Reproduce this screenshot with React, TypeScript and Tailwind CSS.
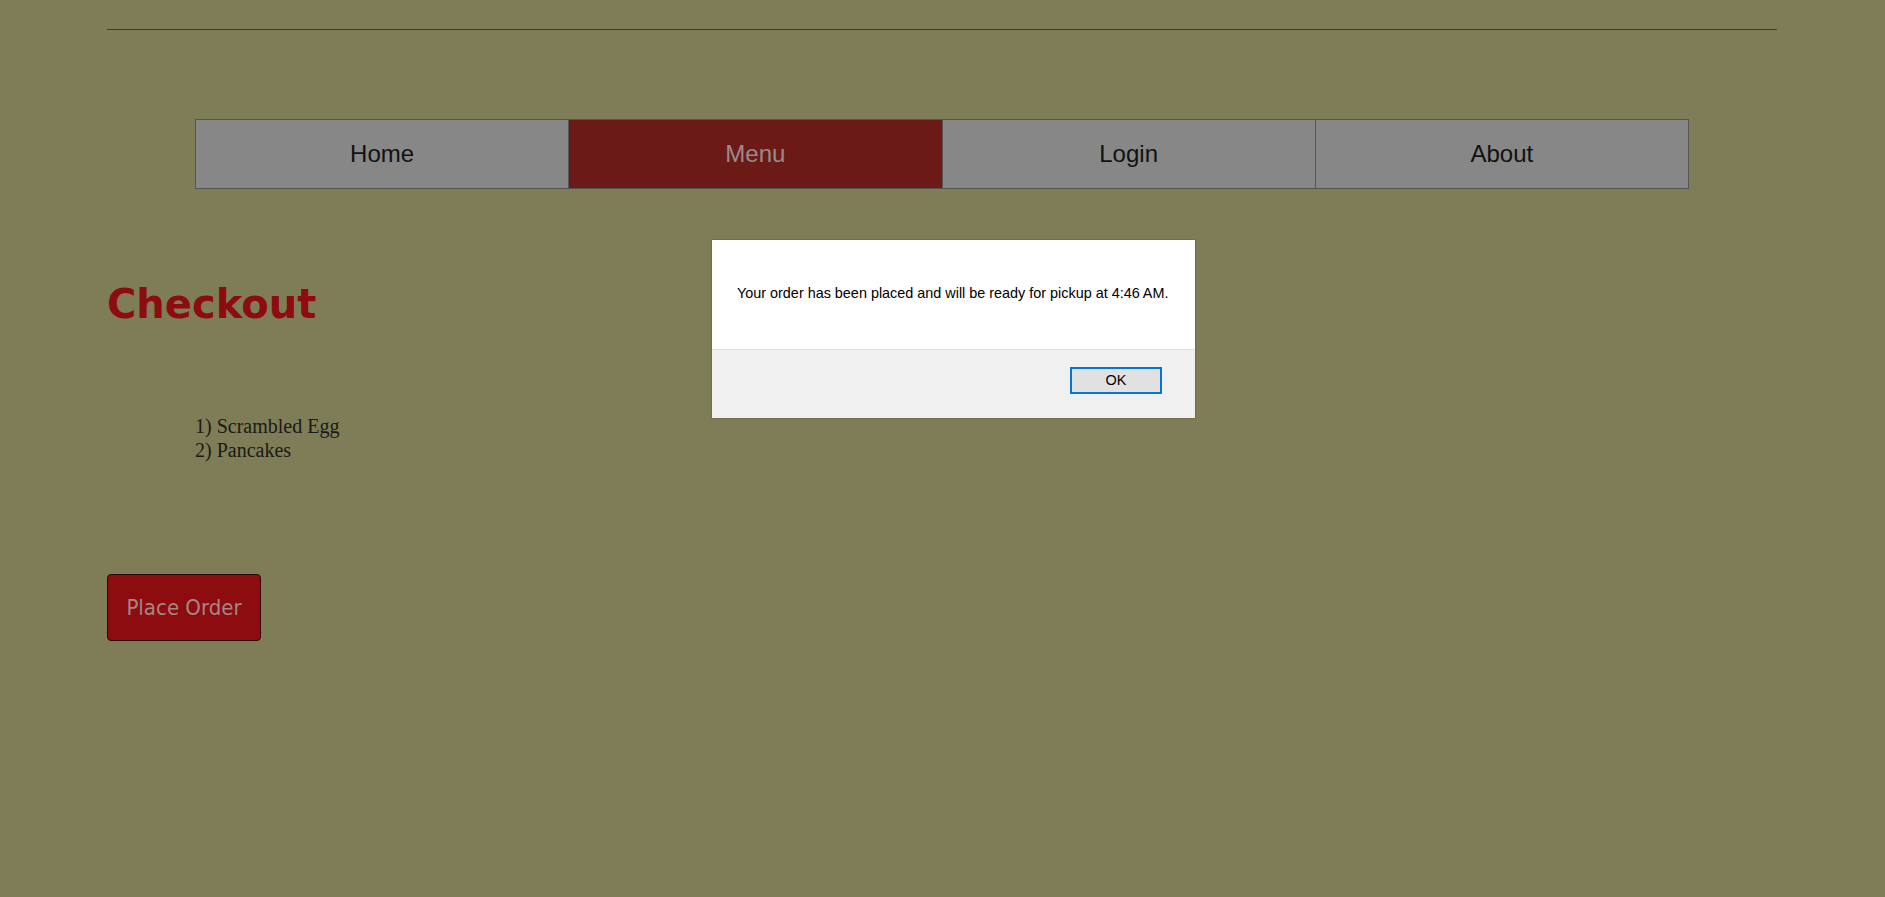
export default function App() {
  const items = [
    { label: "Home", active: false },
    { label: "Menu", active: true },
    { label: "Login", active: false },
    { label: "About", active: false },
  ];
  return (
    <div className="relative w-[1885px] h-[897px] bg-[#7f7c58] overflow-hidden">
      <div className="pl-[107px] pt-[29px]">
        <div className="w-[1670px] h-px bg-[#3e3d33]" />
        <nav className="ml-[88px] mt-[89px] flex w-[1494px] h-[70px]">
          {items.map((it, i) => (
            <div
              key={it.label}
              className={`flex-1 flex items-center justify-center border border-[#565656] ${i > 0 ? "border-l-0" : ""} ${
                it.active ? "bg-[#6b1a18] text-[#9b8a89]" : "bg-[#878787] text-[#111111]"
              } text-[24px] font-['Liberation_Sans',Arial,sans-serif]`}
            >
              {it.label}
            </div>
          ))}
        </nav>
        <h1 className="mt-[91px] text-[40px] leading-[48px] font-bold text-[#8c0c0f] font-['DejaVu_Sans',Verdana,sans-serif]">
          Checkout
        </h1>
        <ul className="ml-[88px] mt-[86px] text-[20px] leading-[24px] text-[#1a1a14] font-['Liberation_Serif','Times_New_Roman',serif]">
          <li>1) Scrambled Egg</li>
          <li>2) Pancakes</li>
        </ul>
        <button className="mt-[112px] w-[154px] h-[67px] rounded-[4px] border border-[#2a0606] bg-[#8c0c0f] text-[#a88584] text-[22px] font-['DejaVu_Sans_Condensed','DejaVu_Sans',Tahoma,sans-serif]">
          Place Order
        </button>
      </div>

      <div className="absolute left-[712px] top-[240px] w-[483px] h-[178px] bg-white shadow-[0_0_2px_rgba(0,0,0,0.35)] flex flex-col font-['Liberation_Sans',Arial,sans-serif]">
        <div className="h-[109px] pl-[25px] pt-[45px] text-[14.4px] leading-[16px] text-black">
          Your order has been placed and will be ready for pickup at 4:46 AM.
        </div>
        <div className="flex-1 bg-[#f0f0f0] border-t border-[#dfdfdf] flex justify-end items-start pt-[17px] pr-[33px]">
          <button className="w-[92px] h-[27px] bg-[#e1e1e1] border-2 border-[#0078d7] text-[14.4px] text-black">
            OK
          </button>
        </div>
      </div>
    </div>
  );
}
